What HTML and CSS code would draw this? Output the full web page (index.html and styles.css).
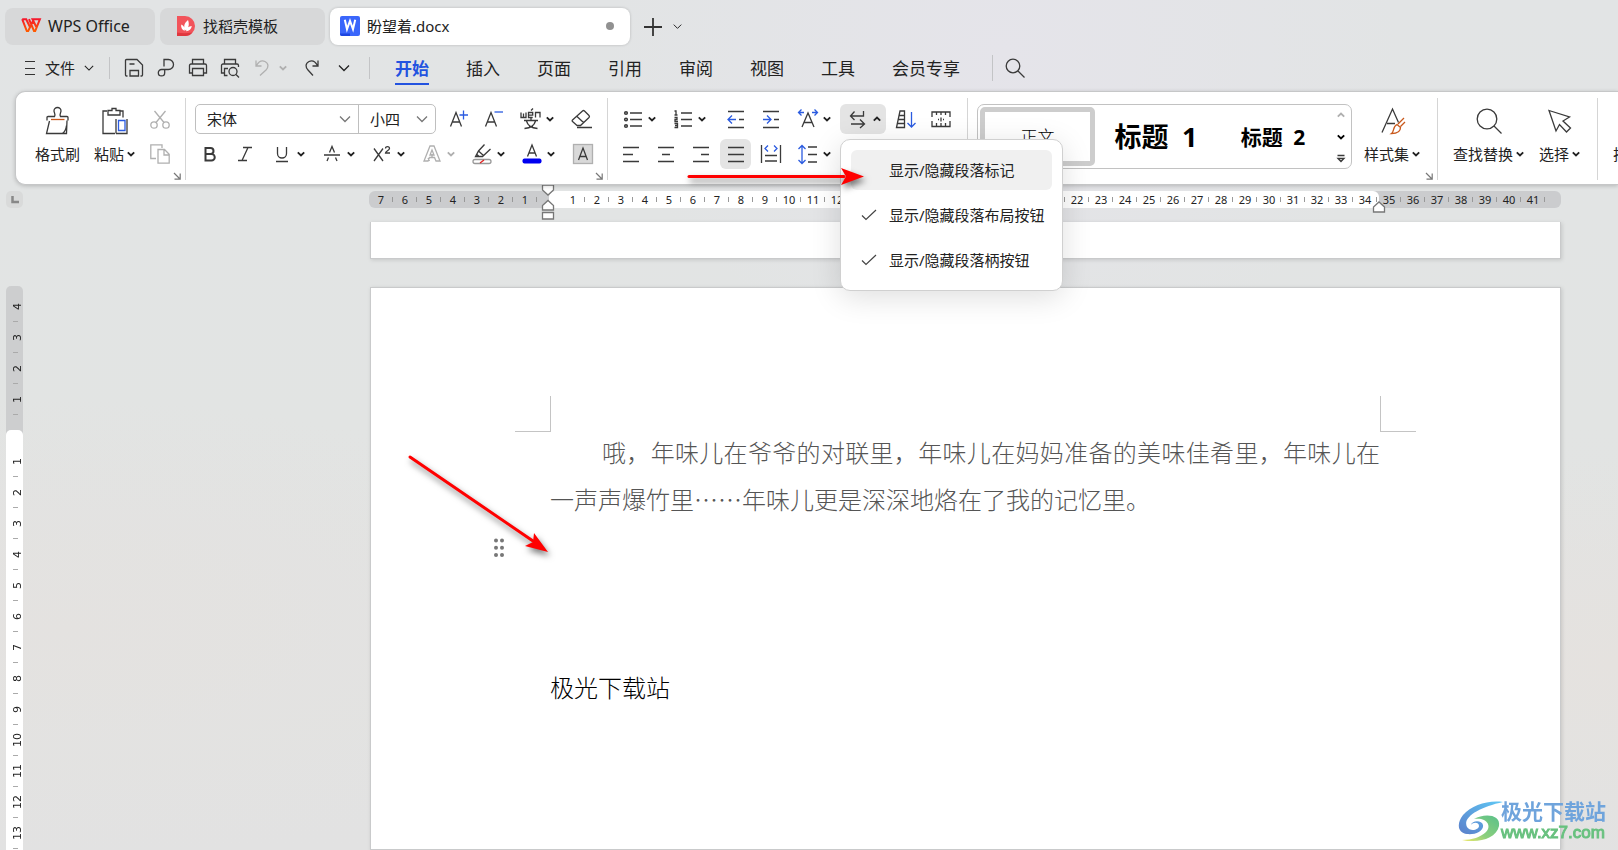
FILE: index.html
```html
<!DOCTYPE html>
<html lang="zh-CN">
<head>
<meta charset="utf-8">
<title>盼望着.docx - WPS Office</title>
<link rel="stylesheet" href="styles.css">
</head>
<body>
<svg class="symbols" aria-hidden="true">
  <symbol id="chev" viewBox="0 0 10 10"><path d="M1.800 3.400 5 6.400l3.200-3" fill="none" stroke="currentColor" stroke-width="1.900"/></symbol>
  <symbol id="chev-up" viewBox="0 0 10 10"><path d="M1.800 6.600 5 3.600l3.200 3" fill="none" stroke="currentColor" stroke-width="1.900"/></symbol>
  <symbol id="chev-thin" viewBox="0 0 12 12"><path d="M1 3.500 6 8.500l5-5" fill="none" stroke="currentColor" stroke-width="1.300"/></symbol>
  <symbol id="launch" viewBox="0 0 8 8"><path d="M1 1l6 6M7.200 1.500v5.700H1.500" fill="none" stroke="currentColor" stroke-width="1.200"/></symbol>
  <symbol id="check" viewBox="0 0 16 12"><path d="M1 6.500 5 10.500 15 1" fill="none" stroke="#444" stroke-width="1.200"/></symbol>
</svg>

<header class="tabbar">
  <button class="tab tab-home"><svg width="20" height="15" viewBox="0 0 20 15"><defs><linearGradient id="wps" x2="0" y2="1"><stop stop-color="#f5182c"/><stop offset="1" stop-color="#ff5a00"/></linearGradient></defs><path d="M1.200 1.200H5.200L9.200 9.500M1.200 1.200 5.800 13H7.200L12.300 2.500M8 1.200 13 13H14.200L18.900 1.200H11.500L15.200 8.800" fill="none" stroke="url(#wps)" stroke-width="2"/></svg>WPS Office</button>
  <button class="tab tab-store"><svg width="20" height="20" viewBox="0 0 20 20"><path d="M1 0h8a10 10 0 0 1 0 20H1z" fill="#f2545b"/><path d="M1 16.500c5 1 10 1 15.500 0A9 9 0 0 1 9 20H1z" fill="#e0383f"/><path d="M9.500 14.500C7 10 8.500 7 12 4c1.500 4 1 8-2.500 10.500zM8.800 14.800C6 14 4.800 11.500 5.200 8.500c2.500 1 4 3.500 3.600 6.300zM10 15.200c.5-3 2.500-5 5.800-5.200-.3 3-2.500 5-5.800 5.200z" fill="#fff"/></svg>找稻壳模板</button>
  <button class="tab tab-doc"><svg width="20" height="20" viewBox="0 0 20 20"><rect width="20" height="20" rx="2" fill="#3a66fb"/><path d="M0 17.500h10V20H2a2 2 0 0 1-2-2z" fill="#1d45e0"/><path d="M4.800 3.800 7 13.200 10 5l3 8.200 2.200-9.400" fill="none" stroke="#fff" stroke-width="2"/></svg><span>盼望着.docx</span><i class="unsaved"></i></button>
  <button class="plain new-tab" aria-label="新建"><svg width="18" height="18" viewBox="0 0 18 18"><path d="M9 0v18M0 9h18" stroke="#333" stroke-width="1.800"/></svg></button>
  <button class="plain" aria-label="标签列表"><svg width="9" height="9"><use href="#chev-thin"/></svg></button>
</header>

<nav class="menubar">
  <button class="plain file"><svg width="12" height="16" viewBox="0 0 12 16"><path d="M1 1.500h10M1 8.500h10M1 14.500h10" stroke="#333" stroke-width="1.200"/></svg><span>文件</span><svg width="10" height="10"><use href="#chev-thin"/></svg></button>
  <i class="sep"></i>
  <div class="quick">
    <button class="plain" aria-label="保存"><svg width="20" height="20" viewBox="0 0 20 20"><path d="M3.500 18H2.500a1 1 0 0 1-1-1V2.500a1 1 0 0 1 1-1H13L18.500 7v10a1 1 0 0 1-1 1h-1M6 18v-5.500h8.500V18zM5.500 6h5"/></svg></button>
    <button class="plain" aria-label="输出为PDF"><svg width="20" height="20" viewBox="0 0 20 20"><path d="M8 8.500V1.500h4.500a4.800 4.800 0 0 1 0 10H5.500a3.200 3.200 0 1 0 3.200 3.200V12"/></svg></button>
    <button class="plain" aria-label="打印"><svg width="20" height="20" viewBox="0 0 20 20"><path d="M4.500 6V1.500h11V6M4.500 15H1.500V7.500A1.500 1.500 0 0 1 3 6h14a1.500 1.500 0 0 1 1.500 1.500V15h-3M4.500 10.500h11v7h-11z"/></svg></button>
    <button class="plain" aria-label="打印预览"><svg width="20" height="20" viewBox="0 0 20 20"><path d="M4.500 6V1.500h11V6M4.500 15H1.500V7.500A1.500 1.500 0 0 1 3 6h14a1.500 1.500 0 0 1 1.500 1.500V9M7.500 17.500h-3v-7H8"/><circle cx="13" cy="13.500" r="4"/><path d="m16 16.500 3 3"/></svg></button>
    <button class="plain faded" aria-label="撤销"><svg width="20" height="20" viewBox="0 0 20 20"><path d="M4 2.500V8h5.500M4.500 7.500C7 3 10 2 13 3.500c4 2 3.500 6 1 8.500l-6 5.500"/></svg></button>
    <button class="plain faded drop" aria-label="撤销列表"><svg width="10" height="10"><use href="#chev"/></svg></button>
    <button class="plain redo" aria-label="恢复"><svg width="20" height="20" viewBox="0 0 20 20"><path d="M16 2.500V8h-5.500M15.500 7.500C13 3 10 2 7 3.500c-4 2-3.500 6-1 8.500l5 5.500"/></svg></button>
    <button class="plain" aria-label="更多"><svg width="12" height="12"><use href="#chev-thin"/></svg></button>
  </div>
  <i class="sep sep-tabs"></i>
  <div class="menus">
    <button class="plain on">开始</button><button class="plain">插入</button><button class="plain">页面</button><button class="plain">引用</button><button class="plain">审阅</button><button class="plain">视图</button><button class="plain">工具</button><button class="plain">会员专享</button>
  </div>
  <i class="sep sep-search"></i>
  <button class="plain search" aria-label="搜索"><svg width="20" height="20" viewBox="0 0 20 20"><circle cx="8" cy="8" r="6.800"/><path d="m13 13 6.500 6.500"/></svg></button>
</nav>

<section class="ribbon">
  <div class="group g-clip">
    <button class="plain big"><svg width="26" height="28" viewBox="0 0 26 28"><path d="M4.500 14 1.500 26.500H17c2.500-1 4-4 4.500-8M2 13.500V10.500a1 1 0 0 1 1-1h6.500c1.500-2-.5-4-.5-5.500a3.500 3.500 0 0 1 7 0c0 1.500-2 3.500-.5 5.500H22a1 1 0 0 1 1 1V13.500M22 13.500l-.5 13H17"/><path d="M6 12.500h13.500" stroke="#c8581b"/></svg><span>格式刷</span></button>
    <button class="plain big"><svg width="28" height="28" viewBox="0 0 28 28"><path d="M6 4H2v22.500h12M7 8V3.500h4V1.500h4v2h4V8zM19.500 4H22v6.500M15 26.500V12M26 12v14.500H15"/><path d="M17.500 13.500h6.500v10h-6.500z" stroke="#2b5be0"/></svg><span>粘贴<svg width="10" height="10"><use href="#chev"/></svg></span></button>
    <div class="stack faded">
      <button class="plain" aria-label="剪切"><svg width="20" height="20" viewBox="0 0 20 20"><path d="M4.500 1 14 12.500M15.500 1 6 12.500"/><circle cx="4" cy="15" r="3.200"/><circle cx="16" cy="15" r="3.200"/></svg></button>
      <button class="plain" aria-label="复制"><svg width="20" height="20" viewBox="0 0 20 20"><path d="M6 14.500H.8V.8H12V4M8 5.500h6.500l4.700 4.700v9H8zM14 6v5h5"/></svg></button>
    </div>
    <button class="plain launcher" aria-label="剪贴板设置"><svg width="8" height="8"><use href="#launch"/></svg></button>
  </div>

  <div class="group g-font">
    <div class="row">
      <div class="combos">
        <label class="combo combo-font"><select aria-label="字体"><option>宋体</option></select><svg width="12" height="12"><use href="#chev-thin"/></svg></label>
        <label class="combo combo-size"><select aria-label="字号"><option>小四</option></select><svg width="12" height="12"><use href="#chev-thin"/></svg></label>
      </div>
      <button class="tool" aria-label="增大字号"><svg width="24" height="24" viewBox="0 0 24 24"><path d="M3.500 19.500 9 5.500l5.500 14M5.500 15h7"/><path d="M16.500 3.500v9M12.500 8h8.500" class="blue"/></svg></button>
      <button class="tool" aria-label="减小字号"><svg width="24" height="24" viewBox="0 0 24 24"><path d="M3.500 19.500 9 5.500l5.500 14M5.500 15h7"/><path d="M12.500 5h8.500" class="blue"/></svg></button>
      <button class="tool dd" aria-label="拼音指南"><svg width="24" height="24" viewBox="0 0 24 24"><path d="M2 5.500v5h5v-5M4.500 6.500v4M9.500 8.200h4.200V5.500H9.500v5h4.200M12 3.500l2-2M16.500 10.500v-5H21v5M5 13.500h14M12 10.500v3M7.500 14c1 4 5 7 11 7.500M16.500 14c-1 4-5 7-11 7.500"/></svg><svg width="10" height="10"><use href="#chev"/></svg></button>
      <button class="tool last" aria-label="清除格式"><svg width="24" height="24" viewBox="0 0 24 24"><path d="M7 18.500 2.500 14.500a1 1 0 0 1 0-1.500L12.500 4a1.500 1.500 0 0 1 2 0L19 8.500a1.500 1.500 0 0 1 0 2L10.500 18.500zM7 9.500 13.500 15.500M7 20.500h15"/></svg></button>
    </div>
    <div class="row">
      <button class="tool" aria-label="加粗"><svg width="24" height="24" viewBox="0 0 24 24"><path d="M7.500 6h5a3 3 0 0 1 0 6h-5zM7.500 12h6a3.200 3.200 0 0 1 0 6.500h-6z" stroke-width="2"/></svg></button>
      <button class="tool" aria-label="倾斜"><svg width="24" height="24" viewBox="0 0 24 24"><path d="M10 5.500h9M5 18.500h9M15 5.500 9 18.500"/></svg></button>
      <button class="tool dd" aria-label="下划线"><svg width="24" height="24" viewBox="0 0 24 24"><path d="M7.500 5v6.500a4.500 4.500 0 0 0 9 0V5M6 19.500h12"/></svg><svg width="10" height="10"><use href="#chev"/></svg></button>
      <button class="tool dd" aria-label="删除线"><svg width="24" height="24" viewBox="0 0 24 24"><path d="M4 13h16M9.500 10.500 12 4.500l2.500 6M8.500 15.500 7 19M15.500 15.500 17 19"/></svg><svg width="10" height="10"><use href="#chev"/></svg></button>
      <button class="tool dd" aria-label="上标"><svg width="24" height="24" viewBox="0 0 24 24"><path d="m4 6.500 9 12.500M13 6.500 4 19M15.500 6.500c0-2.500 4-2.500 4 0 0 1.500-4 3-4 4.500h4.500"/></svg><svg width="10" height="10"><use href="#chev"/></svg></button>
      <button class="tool dd faded" aria-label="文字效果"><svg width="24" height="24" viewBox="0 0 24 24"><path d="M10 4h4l6 15h-4l-1.500-3.500h-5L8 19H4zM12 8l2 5h-4zM8 16l1.500 3M12 12v4"/></svg><svg width="10" height="10"><use href="#chev"/></svg></button>
      <button class="tool dd" aria-label="突出显示"><svg width="24" height="24" viewBox="0 0 24 24"><path d="M14.500 2.500 8.500 9 5.500 14.500h7l8-7.500M8.500 9l5 4.500M7 12.500l2 2"/><rect x="3" y="17.500" width="18" height="4" rx="2" stroke="#999"/><path d="m10 21 4-3" stroke="#e02020"/></svg><svg width="10" height="10"><use href="#chev"/></svg></button>
      <button class="tool dd" aria-label="字体颜色"><svg width="24" height="24" viewBox="0 0 24 24"><path d="M7.500 14.500 12 3l4.500 11.500M9 11h6"/><rect x="2.500" y="16.500" width="19" height="5" rx="2" fill="#0000f0" stroke="none"/></svg><svg width="10" height="10"><use href="#chev"/></svg></button>
      <button class="tool last" aria-label="字符底纹"><svg width="24" height="24" viewBox="0 0 24 24"><rect x="2.500" y="2.500" width="19" height="19" fill="#d9d9d9" stroke="#b0b0b0"/><path d="M7.500 18 12 6l4.500 12M9 14.500h6"/></svg></button>
    </div>
    <button class="plain launcher" aria-label="字体设置"><svg width="8" height="8"><use href="#launch"/></svg></button>
  </div>

  <div class="group g-para">
    <div class="row">
      <button class="tool dd" aria-label="项目符号"><svg width="24" height="24" viewBox="0 0 24 24"><g stroke-width="1.600"><circle cx="5" cy="6" r="1.300"/><circle cx="5" cy="12.500" r="1.300"/><circle cx="5" cy="19" r="1.300"/></g><path d="M9 6h12M9 12.500h12M9 19h12"/></svg><svg width="10" height="10"><use href="#chev"/></svg></button>
      <button class="tool dd" aria-label="编号"><svg width="24" height="24" viewBox="0 0 24 24"><path d="M3.500 4H5v4M3.500 8h3M3.500 10.500h2.500v2H4v2h3M3.500 16.500h3v4h-3M4 18.500h2"/><path d="M10 6h11M10 12.500h11M10 19h11"/></svg><svg width="10" height="10"><use href="#chev"/></svg></button>
      <button class="tool sp" aria-label="减少缩进"><svg width="24" height="24" viewBox="0 0 24 24"><path d="M4 4.500h16M4 20.500h16M15 12.500h5"/><path d="M12 12.500H4M8 8.500l-4 4 4 4" class="blue"/></svg></button>
      <button class="tool" aria-label="增加缩进"><svg width="24" height="24" viewBox="0 0 24 24"><path d="M4 4.500h16M4 20.500h16M15 12.500h5"/><path d="M4 12.500h8M8 8.500l4 4-4 4" class="blue"/></svg></button>
      <button class="tool dd" aria-label="中文版式"><svg width="24" height="24" viewBox="0 0 24 24"><path d="M6 20 12 6l6 14M8 15.500h8"/><path d="M2.500 5.500H8M5.500 2.500l-3 3 3 3M21.500 5.500H16M18.500 2.500l3 3-3 3" class="blue"/></svg><svg width="10" height="10"><use href="#chev"/></svg></button>
      <div class="menu-host">
        <button class="tool dd pressed" aria-label="显示/隐藏编辑标记"><svg width="24" height="24" viewBox="0 0 24 24"><path d="M17.500 4v5H4.500M8.500 4.500 4.500 9 8.500 13M5 17h13M14 12.500l4.500 4.500-4.500 4"/></svg><svg width="10" height="10"><use href="#chev-up"/></svg></button>
        <div class="menu" role="menu">
          <button class="plain item hover" role="menuitem"><i></i>显示/隐藏段落标记</button>
          <button class="plain item" role="menuitem"><i><svg width="16" height="12"><use href="#check"/></svg></i>显示/隐藏段落布局按钮</button>
          <button class="plain item" role="menuitem"><i><svg width="16" height="12"><use href="#check"/></svg></i>显示/隐藏段落柄按钮</button>
        </div>
      </div>
      <button class="tool" aria-label="排序"><svg width="24" height="24" viewBox="0 0 24 24"><path d="M2.500 20.500 6 4h4.500v16.500zM5 8.500h5.500M4 12.500h6.500M3.500 16.500h7"/><path d="M17.500 5v15M13.500 16l4 4 4-4" class="blue"/></svg></button>
      <button class="tool" aria-label="显示网格"><svg width="24" height="24" viewBox="0 0 24 24"><path d="M3 10V5h18v5M3 14v5.500h18V14M7.500 5v3M12 5v3M16.500 5v3M7.500 19v-3M12 19v-3M16.500 19v-3M12 10.500v4M9 12.500h1M14 12.500h1"/></svg></button>
    </div>
    <div class="row">
      <button class="tool" aria-label="左对齐"><svg width="24" height="24" viewBox="0 0 24 24"><path d="M4 5.500h16M4 12.500h10M4 19.500h16"/></svg></button>
      <button class="tool" aria-label="居中"><svg width="24" height="24" viewBox="0 0 24 24"><path d="M4 5.500h16M8 12.500h8M4 19.500h16"/></svg></button>
      <button class="tool" aria-label="右对齐"><svg width="24" height="24" viewBox="0 0 24 24"><path d="M4 5.500h16M12 12.500h8M4 19.500h16"/></svg></button>
      <button class="tool pressed" aria-label="两端对齐"><svg width="24" height="24" viewBox="0 0 24 24"><path d="M4 5.500h16M4 12.500h16M4 19.500h16"/></svg></button>
      <button class="tool" aria-label="分散对齐"><svg width="24" height="24" viewBox="0 0 24 24"><path d="M2.500 3v18M21.500 3v18M6 13.500h12M6 19h12"/><path d="M9 3.500 6 6.500l3 3M15 3.500l3 3-3 3" class="blue"/></svg></button>
      <button class="tool dd" aria-label="行距"><svg width="24" height="24" viewBox="0 0 24 24"><path d="M12 5h9M12 12.500h9M12 20h9"/><path d="M6 3.500v18M2.500 7 6 3.500 9.500 7M2.500 18 6 21.500 9.500 18" class="blue"/></svg><svg width="10" height="10"><use href="#chev"/></svg></button>
    </div>
  </div>

  <div class="group g-style">
    <div class="gallery">
      <button class="plain style-body">正文</button>
      <button class="plain style-h1">标题&ensp;1</button>
      <button class="plain style-h2">标题&ensp;2</button>
      <div class="gallery-nav">
        <button class="plain faded" aria-label="上一行"><svg width="10" height="10"><use href="#chev-up"/></svg></button>
        <button class="plain" aria-label="下一行"><svg width="10" height="10"><use href="#chev"/></svg></button>
        <button class="plain" aria-label="展开"><svg width="10" height="10" viewBox="0 0 10 10"><path d="M1.500 1.500h7M2 4.500l3 3 3-3z"/></svg></button>
      </div>
    </div>
    <button class="plain big"><svg width="26" height="28" viewBox="0 0 26 28"><path d="M2 25.500 12.500 2l6 13.500M7 16.500h8"/><path d="m18 17 6-6M20.500 19.500l4.500-4.500M17 17.500l3.500 3c0 4-3 6-9 6 3-2 1-7 5.500-9z" stroke="#c8581b"/></svg><span>样式集<svg width="10" height="10"><use href="#chev"/></svg></span></button>
    <button class="plain launcher" aria-label="样式设置"><svg width="8" height="8"><use href="#launch"/></svg></button>
  </div>

  <div class="group g-edit">
    <button class="plain big"><svg width="28" height="28" viewBox="0 0 28 28"><circle cx="12" cy="12" r="9.800"/><path d="m19 19 7.500 7.500"/></svg><span>查找替换<svg width="10" height="10"><use href="#chev"/></svg></span></button>
    <button class="plain big"><svg width="28" height="28" viewBox="0 0 28 28"><path d="m3 3.500 20.500 6.500-6.500 4 7.500 7-4 4-7-7.500-3.500 6.500z"/></svg><span>选择<svg width="10" height="10"><use href="#chev"/></svg></span></button>
  </div>
  <div class="group g-layout">
    <button class="plain big"><svg width="28" height="28"></svg><span>排版<svg width="10" height="10"><use href="#chev"/></svg></span></button>
  </div>
</section>

<main class="workspace">
  <aside class="side">
    <span class="tabstop"><svg width="8" height="8" viewBox="0 0 8 8"><path d="M1.500 0v6H8" fill="none" stroke="#888" stroke-width="2.500"/></svg></span>
    <div class="vruler"><div class="v-margin"></div><div class="v-body"></div></div>
  </aside>
  <div class="canvas">
    <div class="hruler">
      <div class="h-margin h-left"></div><div class="h-body"></div><div class="h-margin h-right"></div>
      <svg class="mark mark-left" width="14" height="36" viewBox="0 0 14 36"><g fill="#fff" stroke="#777" stroke-width="1.300"><path d="M1.500 1h11v5L7 11 1.500 6z"/><path d="M1.500 26v-4.500L7 16.500l5.500 5V26zM1.500 28.500h11V35h-11z"/></g></svg>
      <svg class="mark mark-right" width="14" height="12" viewBox="0 0 14 12"><path d="M1.500 11V6L7 1l5.500 5v5z" fill="#fff" stroke="#777" stroke-width="1.300"/></svg>
    </div>
    <div class="page page-prev"></div>
    <article class="page page-main">
      <div class="crops"><i class="crop-l"></i><i class="crop-r"></i></div>
      <div class="text">
        <p class="para">哦，年味儿在爷爷的对联里，年味儿在妈妈准备的美味佳肴里，年味儿在一声声爆竹里……年味儿更是深深地烙在了我的记忆里。</p>
        <div class="blank"><svg width="12" height="20" viewBox="0 0 12 20" fill="#777"><circle cx="3" cy="2.500" r="2"/><circle cx="9" cy="2.500" r="2"/><circle cx="3" cy="9.700" r="2"/><circle cx="9" cy="9.700" r="2"/><circle cx="3" cy="17" r="2"/><circle cx="9" cy="17" r="2"/></svg></div>
        <p class="sign">极光下载站</p>
      </div>
    </article>
  </div>
</main>

<svg class="arrow arrow-menu" width="190" height="40" viewBox="0 0 190 40"><path d="M10 16.500h155" stroke="#f00" stroke-width="3" stroke-linecap="round"/><path d="m162 8 23 8.500L162 25l5-8.500z" fill="#f00"/></svg>
<svg class="arrow arrow-page" width="160" height="120" viewBox="0 0 160 120"><path d="m10 10 123 84" stroke="#f00" stroke-width="3" stroke-linecap="round"/><path d="M134 86l14 19-23-6 8-4z" fill="#f00"/></svg>

<div class="watermark">
  <svg width="46" height="42" viewBox="0 0 46 42"><defs><linearGradient id="wa" x1="1" y1="0" x2="0" y2="1"><stop stop-color="#5fc8f5"/><stop offset="1" stop-color="#5b7fca"/></linearGradient><linearGradient id="wb" x1="1" y1="0" x2="0" y2="1"><stop stop-color="#59c08a"/><stop offset=".6" stop-color="#8ccf7c"/><stop offset="1" stop-color="#f2ea6a"/></linearGradient></defs><path d="M45 2C30 0 14 5 5 15c-7 9-5 18 4 19 8 1 17-3 16-9-1-5-11-5-12 0 2-3 8-3 8 1 0 4-9 6-12 1C4 17 22 7 45 2z" fill="url(#wa)"/><path d="M16 19c10-6 27-5 25 7-2 10-14 15-26 15-4 0-8 0-11-1 10 0 19-3 24-8 6-6 1-15-12-13z" fill="url(#wb)"/></svg>
  <div><b>极光下载站</b><span>www.xz7.com</span></div>
</div>
<script src="script.js"></script>
</body>
</html>
```
FILE: styles.css
```css
* { box-sizing: border-box; }
body {
  margin: 0;
  height: 100vh;
  overflow: hidden;
  display: flex;
  flex-direction: column;
  font: 15px/20px "Noto Sans", "Noto Sans CJK SC", sans-serif;
  color: #222;
  background:
    radial-gradient(ellipse at 62% 6%, #e5e4ea 0, transparent 28%),
    radial-gradient(ellipse at 4% 74%, #e4e2e0 0, transparent 26%),
    radial-gradient(ellipse at 100% 78%, #e5e2df 0, transparent 22%),
    linear-gradient(#e2e4e5, #e2e4e3 50%, #e2e2e2);
}
.symbols { position: absolute; width: 0; height: 0; }
button, select { font: inherit; color: inherit; }
button { display: flex; align-items: center; white-space: nowrap; flex: none; }
svg { flex: none; overflow: visible; }
.plain { background: none; border: 0; padding: 0; }

.tabbar { display: flex; align-items: center; height: 45px; padding: 8px 5px 0; }
.tab {
  height: 37px;
  border: 0;
  border-radius: 8px;
  background: #d7d8d9;
  margin-right: 5px;
  padding: 0 16px 2px;
  gap: 7px;
}
.tab-home { width: 150px; font-size: 16px; }
.tab-store { width: 165px; }
.tab-doc { width: 300px; padding: 0 16px 2px 10px; background: #fff; box-shadow: 0 0 3px #0003; }
.unsaved { width: 8px; height: 8px; border-radius: 4px; background: #919191; margin-left: auto; }
.new-tab { margin: 0 11px 0 9px; }

.menubar { display: flex; align-items: center; height: 46px; padding-left: 24px; }
.file { gap: 9px; }
.sep { width: 1px; height: 22px; background: #c3c4c6; margin: 0 8px 0 15px; }
.quick { display: flex; align-items: center; }
.quick button { width: 32px; height: 32px; justify-content: center; }
.quick .drop { width: 10px; }
.quick .redo { margin-left: 8px; }
.quick svg, .search svg, .tool svg, .big svg, .stack svg, .gallery-nav svg { fill: none; stroke: #3a3a3a; stroke-width: 1.3; }
.faded { color: #b0b0b0; }
.quick .faded svg, .stack svg, .tool.faded svg, .gallery-nav .faded svg { stroke: #b0b0b0; }
svg .blue { stroke: #2b5be0; }
.sep-tabs { margin: 0 25px 0 9px; }
.menus { display: flex; gap: 37px; font-size: 17px; line-height: 24px; }
.menus button { height: 34px; padding-top: 4px; border-bottom: 2px solid transparent; }
.menus .on { color: #2353e0; font-weight: 700; border-color: #2353e0; }
.sep-search { margin: 0 12px 0 32px; height: 26px; }

.ribbon {
  display: flex;
  flex: none;
  height: 94px;
  margin-left: 15px;
  padding: 6px 0 4px;
  border: 1px solid #c6c7c8;
  border-right: 0;
  border-radius: 10px 0 0 10px;
  background: #fff;
  box-shadow: 0 1px 4px #0003;
  position: relative;
  z-index: 2;
}
.group { position: relative; flex: none; border-right: 1px solid #d5d5d5; }
.launcher { position: absolute; right: 4px; bottom: 0; color: #777; }
.row { display: flex; align-items: center; height: 30px; margin-bottom: 5px; }
.big { flex-direction: column; height: 60px; gap: 9px; }
.big span { display: flex; align-items: center; gap: 2px; }
.g-clip { display: flex; width: 170px; padding: 9px 0 0 19px; }
.g-clip .big + .big { margin-left: 14px; }
.stack { margin: 3px 0 0 14px; display: flex; flex-direction: column; gap: 14px; }
.g-font { width: 422px; padding: 6px 0 0 6px; }
.combos { display: flex; height: 30px; width: 241px; margin: 0 5px 0 3px; border: 1px solid #bfbfbf; border-radius: 5px; }
.combo { position: relative; display: flex; align-items: center; }
.combo-font { flex: 1; border-right: 1px solid #bfbfbf; }
.combo-size { width: 76px; }
.combo select { appearance: none; width: 100%; height: 100%; border: 0; background: none; padding: 0 11px; }
.combo svg { position: absolute; right: 7px; color: #777; pointer-events: none; }
.tool { width: 31px; height: 30px; margin: 0 2px; padding: 0; border: 0; border-radius: 6px; background: none; justify-content: center; }
.dd { width: 46px; padding-left: 6px; justify-content: flex-start; gap: 2px; }
.tool.last { margin-left: 5px; }
.tool.sp { margin-left: 7px; }
.pressed { background: #e4e4e4; }
.g-para { width: 360px; padding: 6px 0 0 5px; }

.menu-host { position: relative; }
.menu {
  position: absolute;
  top: 35px;
  left: 2px;
  width: 223px;
  padding: 10px;
  display: flex;
  flex-direction: column;
  gap: 5px;
  border: 1px solid #d0d0d0;
  border-radius: 10px;
  background: #fff;
  box-shadow: 0 6px 30px #0002;
  z-index: 3;
}
.item { height: 40px; padding-left: 10px; border-radius: 6px; }
.item i { width: 28px; display: flex; align-items: center; }
.hover { background: #f0f0f0; }

.g-style { display: flex; width: 470px; padding: 6px 0 0 9px; }
.gallery { display: flex; align-items: center; width: 375px; height: 65px; padding: 2px; border: 1px solid #c2c2c2; border-radius: 7px; color: #000; }
.gallery button { justify-content: center; }
.style-body { width: 115px; height: 59px; border: 5px solid #cdcdcd; border-radius: 5px; font-size: 17px; font-weight: 300; }
.style-h1 { width: 122px; font-size: 27px; font-weight: 700; }
.style-h2 { width: 112px; font-size: 21px; font-weight: 700; }
.gallery-nav { flex: 1; display: flex; flex-direction: column; align-items: center; gap: 12px; padding-left: 4px; }
.g-style .big { margin: 3px 0 0 12px; }
.g-edit { display: flex; width: 160px; gap: 14px; padding: 9px 0 0 15px; }
.g-layout { padding: 9px 15px 0; border: 0; }

.workspace { flex: 1; min-height: 0; display: flex; padding: 6px 57px 0 6px; }
.side { width: 17px; flex: none; display: flex; flex-direction: column; gap: 78px; }
.tabstop { height: 17px; border-radius: 5px; background: #d9dada; display: flex; align-items: center; justify-content: center; flex: none; }
.vruler { flex: 1; min-height: 0; overflow: hidden; border-radius: 5px 5px 0 0; background: #cdcecf; font: 11px/17px "DejaVu Sans", sans-serif; }
.v-margin { height: 144px; padding-top: 5px; }
.v-body { height: 100%; padding-top: 16px; border-radius: 5px 5px 0 0; background: #fff; }
.v-cell {
  height: 31px;
  display: flex;
  align-items: center;
  justify-content: center;
  writing-mode: vertical-rl;
  transform: rotate(180deg);
  padding-right: 3px;
  background: linear-gradient(#aaa, #aaa) center top / 5px 1px no-repeat;
}
.canvas { flex: 1; min-width: 0; margin-left: 346px; display: flex; flex-direction: column; }
.hruler { position: relative; display: flex; height: 17px; border-radius: 6px; background: #cbccce; font: 11px/17px "Noto Sans", sans-serif; flex: none; }
.h-margin, .h-body { display: flex; flex: none; }
.h-body { padding-left: 12px; padding-right: 2px; border-radius: 6px; background: #fff; margin-right: -2px; }
.h-left { width: 180px; }
.h-cell { flex: none; width: 24px; text-align: center; background: linear-gradient(#999, #999) right center / 1px 5px no-repeat; }
.mark { position: absolute; }
.mark-left { left: 172px; top: -7px; }
.mark-right { left: 1003px; top: 10px; }
.page { background: #fff; border: 1px solid #c9cacb; margin-left: 1px; box-shadow: 1px 1px 4px #0002; }
.page-prev { flex: none; height: 37px; margin-top: 14px; border-top: 0; }
.page-main { flex: 1; min-height: 0; margin-top: 28px; padding: 108px 144px 0; overflow: hidden; }
.crops { display: flex; justify-content: space-between; height: 36px; }
.crops i { width: 36px; border-bottom: 1px solid #c4c4c4; }
.crop-l { border-right: 1px solid #c4c4c4; }
.crop-r { border-left: 1px solid #c4c4c4; }
.text { margin-top: -4px; padding: 0 36px 0 35px; font: 300 24px/47px "Noto Sans CJK SC", sans-serif; }
.text p { margin: 0; }
.para { color: #555; text-align: justify; text-indent: 52px; }
.blank { height: 141px; margin-left: -57px; padding-top: 16px; line-height: 20px; }
.sign { color: #000; }

.arrow { position: absolute; z-index: 5; fill: none; pointer-events: none; filter: drop-shadow(2px 4px 3px #0008); }
.arrow-menu { left: 679px; top: 160px; }
.arrow-page { left: 400px; top: 447px; }
.watermark { position: fixed; right: 12px; bottom: 7px; display: flex; z-index: 4; }
.watermark div { display: flex; flex-direction: column; margin-left: -3px; }
.watermark b { font-size: 21px; line-height: 23px; color: #6fa4dc; }
.watermark span { font: 17px/20px "Liberation Sans", sans-serif; color: #68c17f; -webkit-text-stroke: 1px #68c17f; }
```
FILE: script.js
```js
function fill(selector, labels, className) {
  const host = document.querySelector(selector);
  labels.forEach((n) => {
    const cell = document.createElement('div');
    cell.className = className;
    cell.textContent = n;
    host.append(cell);
  });
}
const range = (a, b) => Array.from({ length: Math.abs(b - a) + 1 }, (_, i) => (a < b ? a + i : a - i));
fill('.h-left', range(7, 1), 'h-cell');
fill('.h-body', range(1, 34), 'h-cell');
fill('.h-right', range(35, 41), 'h-cell');
fill('.v-margin', range(4, 1), 'v-cell');
fill('.v-body', range(1, 13), 'v-cell');
```
